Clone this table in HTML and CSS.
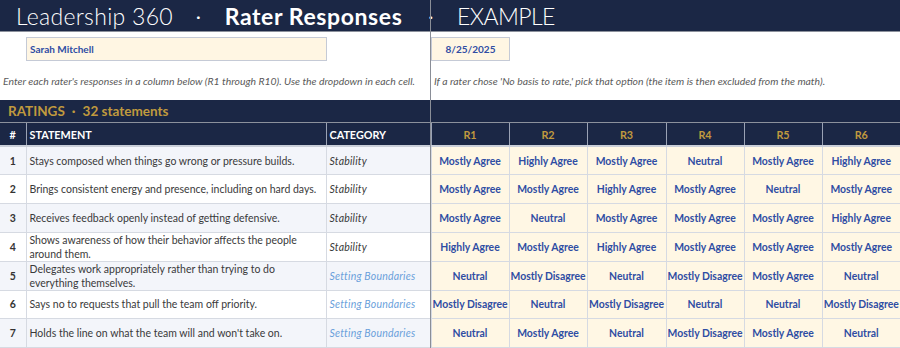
FILE: index.html
```html
<!DOCTYPE html>
<html lang="en">
<head>
<meta charset="utf-8">
<title>Leadership 360 · Rater Responses</title>
<link rel="stylesheet" href="styles.css">
</head>
<body>
<div class="sheet">
  <header class="titlebar">
    <span class="t-light">Leadership 360</span>
    <span class="t-dot">·</span>
    <span class="t-bold">Rater Responses</span>
    <span class="t-dot t-dot2">·</span>
    <span class="t-light t-ex">EXAMPLE</span>
  </header>

  <div class="inputs">
    <div class="in-left"><div class="field name">Sarah Mitchell</div></div>
    <div class="in-right"><div class="field date">8/25/2025</div></div>
  </div>

  <div class="note">
    <div class="note-left">Enter each rater's responses in a column below (R1 through R10). Use the dropdown in each cell.</div>
    <div class="note-right">If a rater chose 'No basis to rate,' pick that option (the item is then excluded from the math).</div>
  </div>

  <div class="ratingsbar">
    <div class="rb-left"><span>RATINGS</span><span class="rb-dot">·</span><span>32 statements</span></div>
    <div class="rb-right"></div>
  </div>

  <table class="grid">
    <colgroup>
      <col class="c-num"><col class="c-stmt"><col class="c-cat">
      <col class="c-r"><col class="c-r"><col class="c-r3"><col class="c-r"><col class="c-r"><col class="c-r">
    </colgroup>
    <thead>
      <tr>
        <th class="h-num">#</th><th class="h-left">STATEMENT</th><th class="h-left h-cat">CATEGORY</th>
        <th class="h-r h-first">R1</th><th class="h-r">R2</th><th class="h-r">R3</th><th class="h-r">R4</th><th class="h-r">R5</th><th class="h-r">R6</th>
      </tr>
    </thead>
    <tbody>
      <tr class="odd">
        <td class="num">1</td><td class="stmt">Stays composed when things go wrong or pressure builds.</td><td class="cat">Stability</td>
        <td class="r first">Mostly Agree</td><td class="r">Highly Agree</td><td class="r">Mostly Agree</td><td class="r">Neutral</td><td class="r">Mostly Agree</td><td class="r">Highly Agree</td>
      </tr>
      <tr>
        <td class="num">2</td><td class="stmt">Brings consistent energy and presence, including on hard days.</td><td class="cat">Stability</td>
        <td class="r first">Mostly Agree</td><td class="r">Mostly Agree</td><td class="r">Highly Agree</td><td class="r">Mostly Agree</td><td class="r">Neutral</td><td class="r">Mostly Agree</td>
      </tr>
      <tr class="odd">
        <td class="num">3</td><td class="stmt">Receives feedback openly instead of getting defensive.</td><td class="cat">Stability</td>
        <td class="r first">Mostly Agree</td><td class="r">Neutral</td><td class="r">Mostly Agree</td><td class="r">Mostly Agree</td><td class="r">Mostly Agree</td><td class="r">Highly Agree</td>
      </tr>
      <tr>
        <td class="num">4</td><td class="stmt">Shows awareness of how their behavior affects the people around them.</td><td class="cat">Stability</td>
        <td class="r first">Highly Agree</td><td class="r">Mostly Agree</td><td class="r">Highly Agree</td><td class="r">Mostly Agree</td><td class="r">Mostly Agree</td><td class="r">Mostly Agree</td>
      </tr>
      <tr class="odd">
        <td class="num">5</td><td class="stmt">Delegates work appropriately rather than trying to do everything themselves.</td><td class="cat sb">Setting Boundaries</td>
        <td class="r first">Neutral</td><td class="r">Mostly Disagree</td><td class="r">Neutral</td><td class="r">Mostly Disagree</td><td class="r">Mostly Agree</td><td class="r">Neutral</td>
      </tr>
      <tr>
        <td class="num">6</td><td class="stmt">Says no to requests that pull the team off priority.</td><td class="cat sb">Setting Boundaries</td>
        <td class="r first">Mostly Disagree</td><td class="r">Neutral</td><td class="r">Mostly Disagree</td><td class="r">Neutral</td><td class="r">Neutral</td><td class="r">Mostly Disagree</td>
      </tr>
      <tr class="odd">
        <td class="num">7</td><td class="stmt">Holds the line on what the team will and won't take on.</td><td class="cat sb">Setting Boundaries</td>
        <td class="r first">Neutral</td><td class="r">Mostly Agree</td><td class="r">Neutral</td><td class="r">Mostly Disagree</td><td class="r">Mostly Agree</td><td class="r">Neutral</td>
      </tr>
    </tbody>
  </table>

  <div class="freeze" aria-hidden="true"></div>
</div>
</body>
</html>
```

FILE: styles.css
```css
* { box-sizing: border-box; }
html, body { margin: 0; padding: 0; background: #ffffff; }
body {
  font-family: Lato, "Open Sans", "Liberation Sans", sans-serif;
  color: #333;
  width: 900px;
  height: 348px;
  overflow: hidden;
}
.sheet { position: relative; width: 900px; }

.titlebar {
  height: 32px;
  background: #1b2745;
  border-bottom: 1px solid #8c919c;
  color: #ffffff;
  display: flex;
  align-items: center;
  padding-left: 16px;
  padding-top: 1px;
  font-size: 23px;
  line-height: 1;
  white-space: nowrap;
}
.t-light { font-weight: 300; letter-spacing: 0.3px; }
.t-bold { font-weight: 700; letter-spacing: 0.6px; }
.t-ex { letter-spacing: -0.6px; }
.t-dot { margin: 0 24px 0 23px; font-size: 18px; }
.t-dot2 { margin: 0 24px 0 26px; }

.inputs {
  display: flex;
  height: 36px;
  padding-top: 5px;
}
.in-left { width: 431px; padding-left: 26px; }
.in-right { flex: 1; }
.field {
  height: 24px;
  background: #fff6e3;
  border: 1px solid #c5cad6;
  color: #2f4da3;
  font-weight: 700;
  font-size: 10px;
  display: flex;
  align-items: center;
}
.name { width: 301px; padding-left: 3px; }
.date { width: 79px; justify-content: center; }

.note {
  display: flex;
  height: 32px;
  align-items: flex-start;
  padding-top: 7px;
  font-style: italic;
  font-size: 10.4px;
  color: #5a5a5a;
  white-space: nowrap;
}
.note-left { width: 431px; padding-left: 3px; overflow: hidden; }
.note-right { padding-left: 3px; }

.ratingsbar {
  display: flex;
  height: 23px;
  background: #1b2745;
  border-bottom: 1px solid #8c919c;
}
.rb-left {
  width: 430px;
  padding-left: 8px;
  color: #c09a3e;
  font-weight: 700;
  font-size: 13.5px;
  display: flex;
  align-items: center;
}
.rb-dot { margin: 0 7px; }
.rb-right { flex: 1; }

.grid {
  border-collapse: collapse;
  table-layout: fixed;
  width: 900px;
}
.c-num { width: 26px; }
.c-stmt { width: 300px; }
.c-cat { width: 105px; }
.c-r { width: 78px; }
.c-r3 { width: 79px; }

thead th {
  height: 23px;
  background: #1b2745;
  color: #ffffff;
  font-weight: 700;
  font-size: 10.8px;
  border-left: 1px solid #9aa2b4;
  border-bottom: 2px solid #c9ced8;
  padding: 0;
}
thead th:first-child { border-left: none; }
.h-num { text-align: center; }
.h-left { text-align: left; padding-left: 3px; }
.h-r { color: #c09a3e; text-align: center; }

tbody td {
  height: 28.7px;
  border-left: 1px solid #d6dae2;
  border-bottom: 1px solid #d6dae2;
  padding: 0;
  vertical-align: middle;
  background: #ffffff;
}
tbody td:first-child { border-left: none; }
tbody tr.odd td { background: #f3f5fa; }
tbody tr td.r, tbody tr.odd td.r { background: #fff7e4; }

.num { text-align: center; font-weight: 700; font-size: 10.5px; color: #333; }
.stmt { padding-left: 3px !important; font-size: 10.5px; line-height: 14px; color: #3a3a3a; }
.cat { padding-left: 3px !important; font-style: italic; font-size: 10.5px; color: #3a3a3a; letter-spacing: 0.2px; }
.cat.sb { color: #6a9fdb; }
.r {
  text-align: center;
  font-weight: 700;
  font-size: 10.4px;
  color: #2f4da3;
  white-space: nowrap;
  overflow: hidden;
}

.freeze {
  position: absolute;
  left: 430px;
  top: 0;
  width: 1px;
  height: 348px;
  background: #8a8e97;
}
```
